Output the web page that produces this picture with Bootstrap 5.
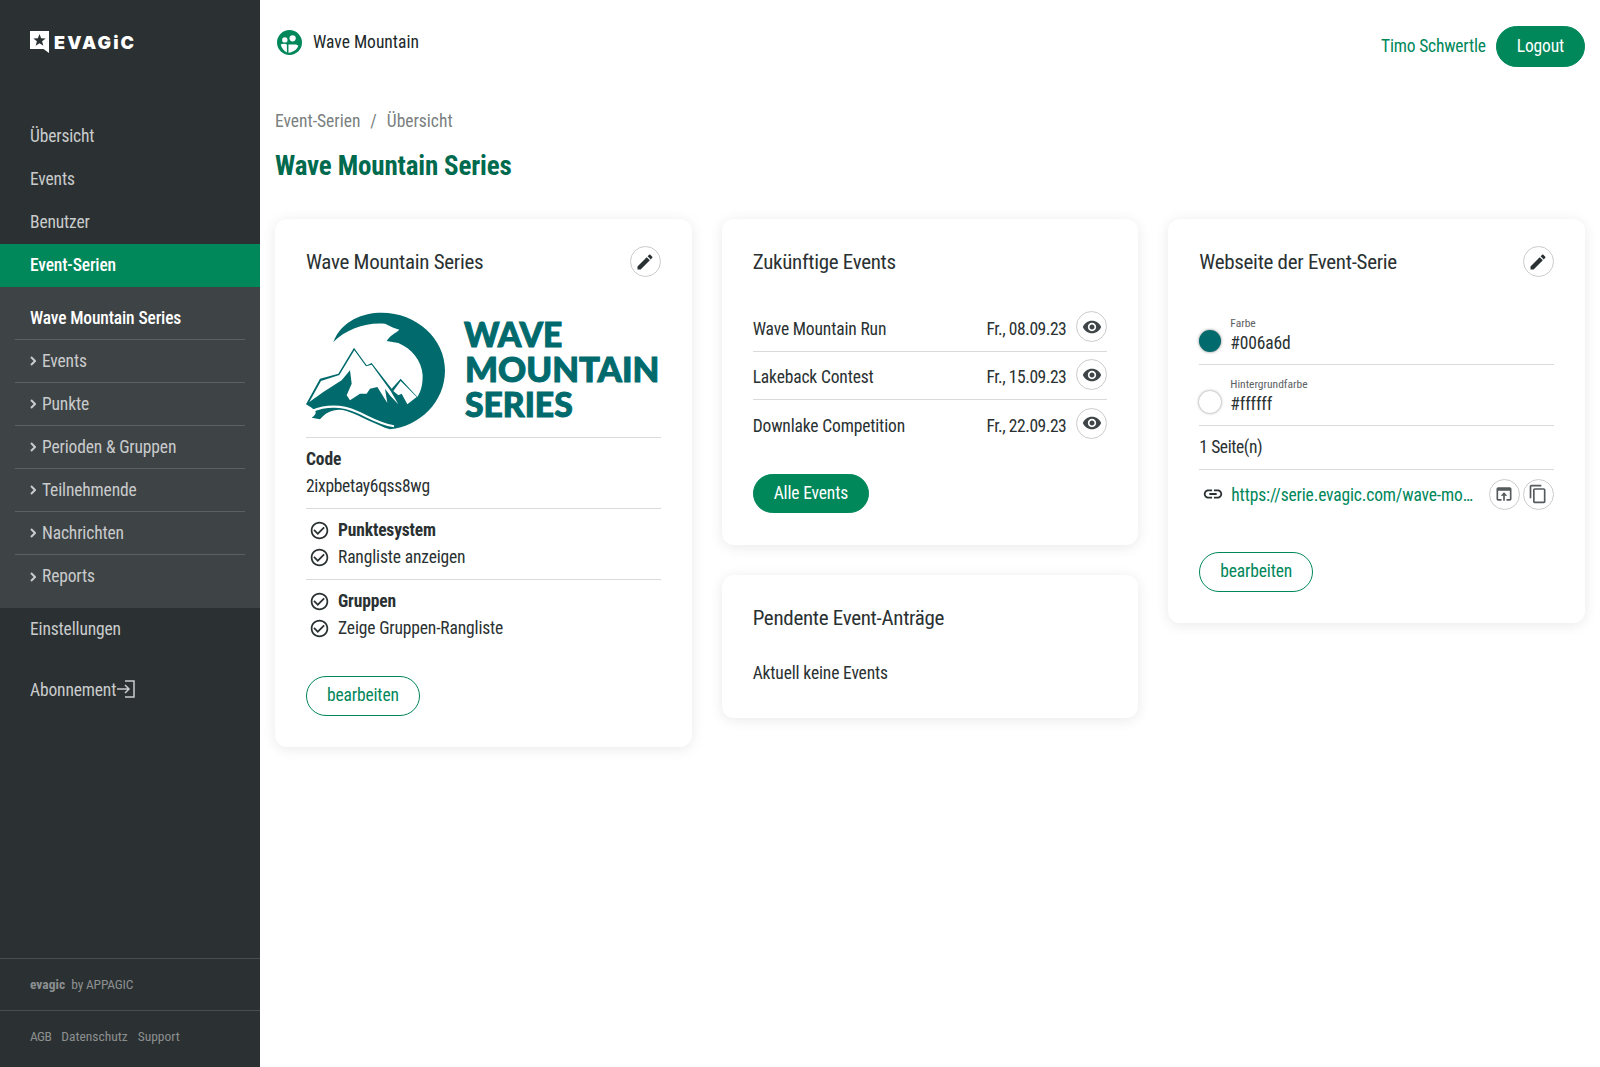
<!doctype html>
<html lang="de"><head><meta charset="utf-8"><title>Wave Mountain Series</title>
<link href="https://cdn.jsdelivr.net/npm/bootstrap@5.3.0/dist/css/bootstrap.min.css" rel="stylesheet">
<style>
body{font-family:Roboto,"Liberation Sans",sans-serif;font-stretch:75%;font-size:17.5px;letter-spacing:-.15px;line-height:27px;color:#2a3132;background:#fff}
a{text-decoration:none}
.shell{min-height:1067px}
.side{width:260px;flex:0 0 260px;background:#2b3132;color:#c9cbcc;padding-bottom:5px}
.brand{height:115px;padding:31px 0 0 30px;gap:5px;color:#fff}
.brand svg{width:19px;height:22px}
.brand-t{font-family:Inter,sans-serif;font-stretch:100%;font-weight:900;font-size:18px;line-height:20px;letter-spacing:2.1px;margin-top:2px}
.nv{display:block;height:43px;line-height:43px;padding-left:30px;color:#c9cbcc}
.nv.on{background:#00875a;color:#fff;font-weight:500}
.subnav{background:#3e4345;padding:10px 15px}
.sb{display:flex;align-items:center;height:43px;padding:0 0 0 15px;color:#c9cbcc;border-bottom:1px solid #5b6062;gap:6px}
.sb:last-child{border-bottom:0}
.sb.ttl{color:#fff;font-weight:500}
.sb svg{width:6px;height:10px}
.abo{margin-top:18px;display:flex;align-items:center}
.abo svg{width:20px;height:18px;margin-top:-3px}
.foot{font-size:13.5px;letter-spacing:0;line-height:20px;color:#8b8f90;border-top:1px solid #484d4f;padding:0 0 2px 30px;height:52px;display:flex;align-items:center;gap:10px}
.foot b{font-weight:700}
.foot .agb{letter-spacing:-.6px}
.foot .app{letter-spacing:-.2px}
.main{padding:0 15px;min-width:0}
.top{height:84px}
.hub-w{height:84px}
.hub{width:25px;height:25px;margin:0 11px 0 2px}
.hub-n{color:#20282a;letter-spacing:0}
.who-w{margin-top:26px}
.who{color:#00875a;margin-right:10px;letter-spacing:-.2px}
.btn-g{background:#00875a;color:#fff;border:1px solid #00875a;border-radius:50rem;font-size:17.5px;letter-spacing:-.15px;line-height:27px;padding:5px 20px}
.btn-g:hover{background:#00875a;color:#fff}
.btn-l{background:#fff;color:#00875a;border:1px solid #00875a;border-radius:50rem;font-size:17.5px;letter-spacing:-.15px;line-height:27px;padding:5px 20px;height:40px}
.btn-l:hover{background:#fff;color:#00875a}
.logout{height:41px;padding:6px 20px}
.crumbs{color:#7b7f80;height:27px;margin-top:24px;margin-bottom:-1px;gap:10px;letter-spacing:0}
.crumbs span{color:#7b7f80}
.ttl-main{font-size:27px;line-height:36px;font-weight:700;color:#006a4e;margin:14px 0 35px}
.cols{--bs-gutter-x:30px;--bs-gutter-y:0}
.crd{border:0;border-radius:12px;box-shadow:0 2px 14px rgba(0,0,0,.09);margin-bottom:30px}
.crd .card-body{padding:27px 31px 31px}
.crd-h{height:31px}
.crd-t{font-size:21px;letter-spacing:-.3px;line-height:31px;margin:0;padding-top:2px;font-weight:400}
.rnd{width:31px;height:31px;border:1px solid #ccc;border-radius:50%;background:#fff;padding:0;display:flex;align-items:center;justify-content:center;flex:none}
.rnd svg{width:20px;height:20px;fill:#2a3132}
.rnd.gy svg{fill:#555a5c}
.wml{display:block;width:354px;height:118px;margin:35px 0 7px}
.wml text{font-family:Lato,sans-serif;font-stretch:100%;letter-spacing:0;font-weight:900;font-size:103px;fill:#006a6d;stroke:#006a6d;stroke-width:3}
.blk{padding:8px 0;border-top:1px solid #d9dadb}
.code-v{letter-spacing:-.3px}
.chk{display:flex;align-items:center;height:27px;padding-left:3px;gap:8px}
.chk svg{width:21px;height:21px;fill:#2a3132}
.b5{font-weight:700}
.act{margin-top:26px}
.ev{height:48px;border-bottom:1px solid #d9dadb}
.ev:last-of-type{border-bottom:0}
.ev>span{padding-top:4px}
.ev>.dt{letter-spacing:-.45px}
.evs{margin-top:27px}
.ev .rnd{margin:-2px 0 0 10px}
.ev .rnd svg{width:20px;height:20px;fill:#3f4446}
.act2{margin:26px 0 1px}
.none{margin-top:27px}
.clr{height:61px;border-bottom:1px solid #d9dadb;padding-top:12px;display:flex;gap:9px}
.clrs{margin-top:27px}
.dot{width:22px;height:22px;border-radius:50%;margin-top:14px;flex:none;box-shadow:0 0 3px rgba(0,0,0,.5)}
.dot-a{background:#006a6d}.dot-b{background:#fff}
.lbl{font-size:11.5px;letter-spacing:0;line-height:14px;color:#5c6163}
.val{line-height:26px;margin-top:0}
.seiten{height:44px;line-height:43px;border-bottom:1px solid #d9dadb;letter-spacing:-.4px}
.lnk{height:48px;gap:3px}
.lnk .i{width:22px;height:22px;fill:#2a3132;margin:0 4px 0 3px;flex:none}
.lnk a{color:#00875a;flex:1;min-width:0;white-space:nowrap;overflow:hidden;text-overflow:ellipsis;margin-right:7px;padding-top:2px}
.act3{margin-top:34px}
</style></head><body>
<div class="shell d-flex">
<aside class="side d-flex flex-column">
  <div class="brand d-flex align-items-start">
    <svg viewBox="0 0 19 22"><path fill="#fff" fill-rule="evenodd" d="M0 0H19V22L13.5 18H0ZM9.5 3L11.1 7.3L15.7 7.5L12.1 10.3L13.3 14.8L9.5 12.2L5.7 14.8L6.9 10.3L3.3 7.5L7.9 7.3Z"/></svg>
    <span class="brand-t">EVAGiC</span>
  </div>
  <a class="nv" href="#">Übersicht</a>
  <a class="nv" href="#">Events</a>
  <a class="nv" href="#">Benutzer</a>
  <a class="nv on" href="#">Event-Serien</a>
  <div class="subnav">
    <a class="sb ttl" href="#">Wave Mountain Series</a>
    <a class="sb" href="#"><svg viewBox="0 0 6 10"><path d="M1 1l4 4-4 4" fill="none" stroke="#c9cbcc" stroke-width="2"/></svg>Events</a>
    <a class="sb" href="#"><svg viewBox="0 0 6 10"><path d="M1 1l4 4-4 4" fill="none" stroke="#c9cbcc" stroke-width="2"/></svg>Punkte</a>
    <a class="sb" href="#"><svg viewBox="0 0 6 10"><path d="M1 1l4 4-4 4" fill="none" stroke="#c9cbcc" stroke-width="2"/></svg>Perioden &amp; Gruppen</a>
    <a class="sb" href="#"><svg viewBox="0 0 6 10"><path d="M1 1l4 4-4 4" fill="none" stroke="#c9cbcc" stroke-width="2"/></svg>Teilnehmende</a>
    <a class="sb" href="#"><svg viewBox="0 0 6 10"><path d="M1 1l4 4-4 4" fill="none" stroke="#c9cbcc" stroke-width="2"/></svg>Nachrichten</a>
    <a class="sb" href="#"><svg viewBox="0 0 6 10"><path d="M1 1l4 4-4 4" fill="none" stroke="#c9cbcc" stroke-width="2"/></svg>Reports</a>
  </div>
  <a class="nv" href="#">Einstellungen</a>
  <a class="nv abo" href="#">Abonnement<svg viewBox="0 0 20 18"><path d="M1 9h12M9 5l4 4-4 4M9 1h9v16H9" fill="none" stroke="#c9cbcc" stroke-width="1.5"/></svg></a>
  <div class="foot mt-auto"><span><b>evagic</b>&nbsp; <span class="app">by APPAGIC</span></span></div>
  <div class="foot"><span class="agb">AGB</span><span>Datenschutz</span><span>Support</span></div>
</aside>
<main class="main flex-grow-1">
  <div class="top d-flex justify-content-between align-items-start">
    <div class="hub-w d-flex align-items-center">
      <svg class="hub" viewBox="0 0 24 24"><circle cx="12" cy="12" r="12" fill="#00875a"/><circle cx="7.5" cy="9.5" r="2.6" fill="#fff"/><circle cx="15" cy="8" r="3" fill="#fff"/><path fill="#fff" d="M3.5 14c2-1 4.500-1 6 0v7.500C7 20.500 4.500 18 3.500 14zM11 14h6c1.500 0 2.500.5 3.500 1-1 3-4 6-9.500 6.800z"/></svg>
      <span class="hub-n">Wave Mountain</span>
    </div>
    <div class="who-w d-flex align-items-center">
      <span class="who">Timo Schwertle</span>
      <a class="btn btn-g logout" href="#">Logout</a>
    </div>
  </div>
  <div class="crumbs d-flex"><span>Event-Serien</span><span>/</span><span>Übersicht</span></div>
  <h1 class="ttl-main">Wave Mountain Series</h1>
  <div class="row cols">
    <div class="col-4">
      <div class="card crd"><div class="card-body">
        <div class="crd-h d-flex justify-content-between align-items-center">
          <h2 class="crd-t">Wave Mountain Series</h2>
          <button class="rnd" type="button" aria-label="bearbeiten"><svg viewBox="0 0 24 24"><path d="M3 17.250V21h3.750L17.810 9.940l-3.750-3.750L3 17.250zM20.710 7.040c.39-.39.39-1.020 0-1.410l-2.340-2.340c-.39-.39-1.020-.39-1.410 0l-1.830 1.830 3.750 3.750 1.830-1.830z"/></svg></button>
        </div>
        <svg class="wml" viewBox="108 275 1062 354">
          <path fill="#006a6d" d="M190 365C215 300 280 277 335 277C440 277 525 355 525 450C525 545 450 618 360 627C320 615 280 590 230 572C200 562 170 572 150 597L125 592C150 575 130 567 125 562L108 552L150 475L205 460L252 382L290 435L305 428L365 505L392 475L442 530C455 510 458 490 458 465C455 420 425 385 385 368L350 362C360 345 375 340 388 328L370 322L345 310C290 305 230 325 190 365Z"/>
          <path fill="#fff" d="M118 545L153 482L208 464L253 390L288 438L305 433L362 512L385 552L362 528L345 505L352 548L322 500L300 505L290 520L270 520L240 540L230 525L245 490L240 450L215 480L160 515Z"/>
          <path fill="#fff" d="M370 512L392 482L440 530L412 552L395 520L385 525Z"/>
          <path fill="none" stroke="#fff" stroke-width="6" d="M125 572C175 552 220 556 262 575C300 592 330 612 372 618"/>
          <text x="582" y="380" textLength="295" lengthAdjust="spacingAndGlyphs">WAVE</text>
          <text x="585" y="485" textLength="583" lengthAdjust="spacingAndGlyphs">MOUNTAIN</text>
          <text x="585" y="590" textLength="323" lengthAdjust="spacingAndGlyphs">SERIES</text>
        </svg>
        <div class="blk"><div class="b5">Code</div><div class="code-v">2ixpbetay6qss8wg</div></div>
        <div class="blk">
          <div class="chk b5"><svg viewBox="0 0 24 24"><path d="M16.590 7.580L10 14.170l-3.590-3.580L5 12l5 5 8-8zM12 2C6.480 2 2 6.480 2 12s4.480 10 10 10 10-4.480 10-10S17.520 2 12 2zm0 18c-4.420 0-8-3.580-8-8s3.580-8 8-8 8 3.580 8 8-3.580 8-8 8z"/></svg>Punktesystem</div>
          <div class="chk"><svg viewBox="0 0 24 24"><path d="M16.590 7.580L10 14.170l-3.590-3.580L5 12l5 5 8-8zM12 2C6.480 2 2 6.480 2 12s4.480 10 10 10 10-4.480 10-10S17.520 2 12 2zm0 18c-4.420 0-8-3.580-8-8s3.580-8 8-8 8 3.580 8 8-3.580 8-8 8z"/></svg>Rangliste anzeigen</div>
        </div>
        <div class="blk">
          <div class="chk b5"><svg viewBox="0 0 24 24"><path d="M16.590 7.580L10 14.170l-3.590-3.580L5 12l5 5 8-8zM12 2C6.480 2 2 6.480 2 12s4.480 10 10 10 10-4.480 10-10S17.520 2 12 2zm0 18c-4.420 0-8-3.580-8-8s3.580-8 8-8 8 3.580 8 8-3.580 8-8 8z"/></svg>Gruppen</div>
          <div class="chk"><svg viewBox="0 0 24 24"><path d="M16.590 7.580L10 14.170l-3.590-3.580L5 12l5 5 8-8zM12 2C6.480 2 2 6.480 2 12s4.480 10 10 10 10-4.480 10-10S17.520 2 12 2zm0 18c-4.420 0-8-3.580-8-8s3.580-8 8-8 8 3.580 8 8-3.580 8-8 8z"/></svg>Zeige Gruppen-Rangliste</div>
        </div>
        <div class="act"><a class="btn btn-l" href="#">bearbeiten</a></div>
      </div></div>
    </div>
    <div class="col-4">
      <div class="card crd"><div class="card-body">
        <div class="crd-h d-flex align-items-center"><h2 class="crd-t">Zukünftige Events</h2></div>
        <div class="evs">
          <div class="ev d-flex align-items-center"><span class="flex-grow-1">Wave Mountain Run</span><span class="dt">Fr., 08.09.23</span><button class="rnd" type="button" aria-label="ansehen"><svg viewBox="0 0 24 24"><path d="M12 4.500C7 4.500 2.730 7.610 1 12c1.730 4.390 6 7.500 11 7.500s9.270-3.110 11-7.500c-1.730-4.390-6-7.500-11-7.500zM12 17c-2.760 0-5-2.240-5-5s2.240-5 5-5 5 2.240 5 5-2.240 5-5 5zm0-8c-1.660 0-3 1.340-3 3s1.340 3 3 3 3-1.340 3-3-1.340-3-3-3z"/></svg></button></div>
          <div class="ev d-flex align-items-center"><span class="flex-grow-1">Lakeback Contest</span><span class="dt">Fr., 15.09.23</span><button class="rnd" type="button" aria-label="ansehen"><svg viewBox="0 0 24 24"><path d="M12 4.500C7 4.500 2.730 7.610 1 12c1.730 4.390 6 7.500 11 7.500s9.270-3.110 11-7.500c-1.730-4.390-6-7.500-11-7.500zM12 17c-2.760 0-5-2.240-5-5s2.240-5 5-5 5 2.240 5 5-2.240 5-5 5zm0-8c-1.660 0-3 1.340-3 3s1.340 3 3 3 3-1.340 3-3-1.340-3-3-3z"/></svg></button></div>
          <div class="ev d-flex align-items-center"><span class="flex-grow-1">Downlake Competition</span><span class="dt">Fr., 22.09.23</span><button class="rnd" type="button" aria-label="ansehen"><svg viewBox="0 0 24 24"><path d="M12 4.500C7 4.500 2.730 7.610 1 12c1.730 4.390 6 7.500 11 7.500s9.270-3.110 11-7.500c-1.730-4.390-6-7.500-11-7.500zM12 17c-2.760 0-5-2.240-5-5s2.240-5 5-5 5 2.240 5 5-2.240 5-5 5zm0-8c-1.660 0-3 1.340-3 3s1.340 3 3 3 3-1.340 3-3-1.340-3-3-3z"/></svg></button></div>
        </div>
        <div class="act2"><a class="btn btn-g" href="#">Alle Events</a></div>
      </div></div>
      <div class="card crd"><div class="card-body">
        <div class="crd-h d-flex align-items-center"><h2 class="crd-t">Pendente Event-Anträge</h2></div>
        <div class="none">Aktuell keine Events</div>
      </div></div>
    </div>
    <div class="col-4">
      <div class="card crd"><div class="card-body">
        <div class="crd-h d-flex justify-content-between align-items-center">
          <h2 class="crd-t">Webseite der Event-Serie</h2>
          <button class="rnd" type="button" aria-label="bearbeiten"><svg viewBox="0 0 24 24"><path d="M3 17.250V21h3.750L17.810 9.940l-3.750-3.750L3 17.250zM20.710 7.040c.39-.39.39-1.020 0-1.410l-2.340-2.340c-.39-.39-1.020-.39-1.410 0l-1.830 1.830 3.750 3.750 1.830-1.830z"/></svg></button>
        </div>
        <div class="clrs">
          <div class="clr"><span class="dot dot-a"></span><div><div class="lbl">Farbe</div><div class="val">#006a6d</div></div></div>
          <div class="clr"><span class="dot dot-b"></span><div><div class="lbl">Hintergrundfarbe</div><div class="val">#ffffff</div></div></div>
        </div>
        <div class="seiten">1 Seite(n)</div>
        <div class="lnk d-flex align-items-center">
          <svg class="i" viewBox="0 0 24 24"><path d="M3.900 12c0-1.710 1.390-3.100 3.100-3.100h4V7H7c-2.760 0-5 2.240-5 5s2.240 5 5 5h4v-1.900H7c-1.710 0-3.100-1.390-3.100-3.100zM8 13h8v-2H8v2zm9-6h-4v1.900h4c1.710 0 3.100 1.390 3.100 3.100s-1.390 3.100-3.100 3.100h-4V17h4c2.760 0 5-2.240 5-5s-2.240-5-5-5z"/></svg>
          <a href="#">https://serie.evagic.com/wave-mountain-series</a>
          <button class="rnd gy" type="button" aria-label="öffnen"><svg viewBox="0 0 24 24"><path d="M19 4H5c-1.110 0-2 .9-2 2v12c0 1.100.89 2 2 2h4v-2H5V8h14v10h-4v2h4c1.100 0 2-.9 2-2V6c0-1.100-.89-2-2-2zm-7 6l-4 4h3v6h2v-6h3l-4-4z"/></svg></button>
          <button class="rnd gy" type="button" aria-label="kopieren"><svg viewBox="0 0 24 24"><path d="M16 1H4c-1.100 0-2 .9-2 2v14h2V3h12V1zm3 4H8c-1.100 0-2 .9-2 2v14c0 1.100.9 2 2 2h11c1.100 0 2-.9 2-2V7c0-1.100-.9-2-2-2zm0 16H8V7h11v14z"/></svg></button>
        </div>
        <div class="act3"><a class="btn btn-l" href="#">bearbeiten</a></div>
      </div></div>
    </div>
  </div>
</main>
</div>
<script src="https://cdn.jsdelivr.net/npm/bootstrap@5.3.0/dist/js/bootstrap.bundle.min.js"></script>
</body></html>
